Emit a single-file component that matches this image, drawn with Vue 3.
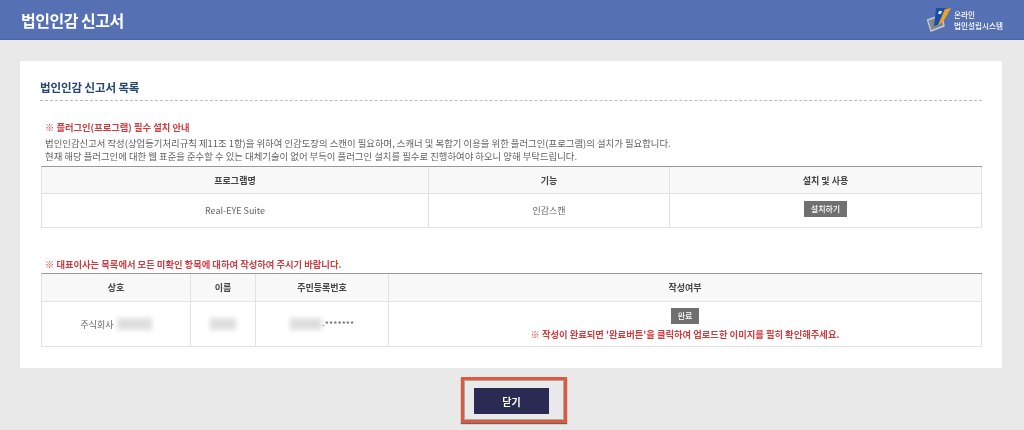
<template>
  <div class="page">
    <header class="top">
      <h1>법인인감 신고서</h1>
      <div class="brand">
        <svg width="26" height="25" viewBox="0 0 26 25">
          <path d="M1.5 13 L16 8 L18 19 L5 24 Z" fill="#7f8795" stroke="#c6c9cf" stroke-width="1.4" />
          <path d="M10 1 L24 1 L19 8 L17 8 L14 17 L8 19 Z" fill="#1b4ea6" />
          <path d="M19 2 L25 1 L17 15 L12 18 Z" fill="#efa321" />
          <path d="M13 4 L16 4 L15 7 L12 7 Z" fill="#dfe8f7" />
        </svg>
        <div class="brand-text">온라인<br />법인설립시스템</div>
      </div>
    </header>

    <main class="card">
      <h2>법인인감 신고서 목록</h2>

      <p class="notice first">※ 플러그인(프로그램) 필수 설치 안내</p>
      <p class="desc">법인인감신고서 작성(상업등기처리규칙 제11조 1항)을 위하여 인감도장의 스캔이 필요하며, 스캐너 및 복합기 이용을 위한 플러그인(프로그램)의 설치가 필요합니다.</p>
      <p class="desc">현재 해당 플러그인에 대한 웹 표준을 준수할 수 있는 대체기술이 없어 부득이 플러그인 설치를 필수로 진행하여야 하오니 양해 부탁드립니다.</p>

      <div class="tbl plugin">
        <div v-for="h in pluginHeads" :key="h" class="th">{{ h }}</div>
        <div class="td">Real-EYE Suite</div>
        <div class="td">인감스캔</div>
        <div class="td"><button class="mini install">설치하기</button></div>
      </div>

      <p class="notice second">※ 대표이사는 목록에서 모든 미확인 항목에 대하여 작성하여 주시기 바랍니다.</p>

      <div class="tbl ceo">
        <div v-for="h in ceoHeads" :key="h" class="th">{{ h }}</div>
        <div class="td">주식회사<span class="smudge co"></span></div>
        <div class="td"><span class="smudge name"></span></div>
        <div class="td"><span class="smudge rrn"></span>-*******</div>
        <div class="td status">
          <button class="mini">완료</button>
          <p class="warn">※ 작성이 완료되면 '완료버튼'을 클릭하여 업로드한 이미지를 필히 확인해주세요.</p>
        </div>
      </div>
    </main>

    <div class="actions">
      <div class="highlight">
        <button class="close">닫기</button>
      </div>
    </div>
  </div>
</template>

<script setup>
const pluginHeads = ['프로그램명', '기능', '설치 및 사용']
const ceoHeads = ['상호', '이름', '주민등록번호', '작성여부']
</script>

<style>
html, body { margin: 0; background: #e9e9e9; }
</style>

<style scoped>
.page {
  width: 1024px;
  height: 430px;
  overflow: hidden;
  background: #e9e9e9;
  font-family: "Noto Sans CJK KR", "Noto Sans", sans-serif;
  color: #666;
  filter: blur(0.45px);
}
.top {
  height: 40px;
  background: #5571b3;
  display: flex;
  align-items: center;
  justify-content: space-between;
  padding: 0 21px 0 21px;
  border-bottom: 1px solid #4e669f;
  box-sizing: border-box;
}
h1 {
  margin: 0;
  font-size: 16px;
  font-weight: 700;
  color: #fff;
  letter-spacing: -0.5px;
}
.brand { display: flex; align-items: center; gap: 2px; }
.brand-text { font-size: 7.6px; line-height: 11px; color: #fff; font-weight: 500; }
.card {
  margin: 21px 22px 0 20px;
  height: 307px;
  box-sizing: border-box;
  background: #fff;
  padding: 17px 20px 0;
}
h2 {
  margin: 0;
  height: 22px;
  line-height: 18px;
  font-size: 11.5px;
  font-weight: 700;
  color: #23466f;
  letter-spacing: -0.1px;
  border-bottom: 1px dashed #bbb;
}
p { margin: 0; }
.notice {
  font-size: 9.3px;
  font-weight: 700;
  line-height: 14px;
  color: #cc3c40;
  padding-left: 5px;
}
.notice.first { margin-top: 19px; }
.notice.second { margin-top: 29px; }
.desc {
  font-size: 9.4px;
  line-height: 13px;
  padding-left: 5px;
  color: #5f5f5f;
  white-space: nowrap;
}
.notice.first + .desc { margin-top: 3px; }
.tbl {
  display: grid;
  margin: 1px 0 0 1px;
  border-top: 1px solid #999;
  border-left: 1px solid #e2e2e2;
  font-size: 9px;
}
.notice.second + .tbl { margin-top: 2px; }
.plugin { grid-template-columns: 387px 241px 312px; grid-template-rows: 27px 34px; margin-top: 3px; }
.ceo { grid-template-columns: 149px 65px 133px 593px; grid-template-rows: 28px 45px; }
.th, .td {
  display: flex;
  align-items: center;
  justify-content: center;
  border-right: 1px solid #e2e2e2;
  border-bottom: 1px solid #e2e2e2;
  box-sizing: border-box;
}
.th { background: #f8f8f8; font-weight: 700; color: #444; }
.td { color: #666; }
.mini {
  border: 0;
  padding: 0;
  background: #707070;
  color: #fff;
  font-family: inherit;
  font-size: 8px;
  font-weight: 500;
  width: 43px;
  height: 16px;
  line-height: 16px;
}
.install { margin-bottom: 4px; }
.status { flex-direction: column; justify-content: flex-start; padding-top: 6px; gap: 3px; }
.status .mini { width: 28px; }
.warn { font-size: 9.3px; font-weight: 700; color: #cc3c40; line-height: 14px; }
.smudge {
  display: inline-block;
  height: 12px;
  background: #dedede;
  filter: blur(2.5px);
}
.co { width: 35px; margin-left: 3px; }
.name { width: 26px; }
.rrn { width: 32px; }
.actions { display: flex; justify-content: center; padding: 9px 0 0 4px; }
.highlight {
  width: 106px;
  height: 46px;
  box-sizing: border-box;
  border: 3px solid #dd5a3c;
  padding: 8px 5px 6px 10px;
  box-shadow: 0 1px 1px #666, inset 0 0 0 1px #aaa;
}
.close {
  display: block;
  width: 75px;
  height: 26px;
  border: 0;
  background: #2a2a52;
  color: #fff;
  font-family: inherit;
  font-size: 10px;
  font-weight: 700;
}
</style>
